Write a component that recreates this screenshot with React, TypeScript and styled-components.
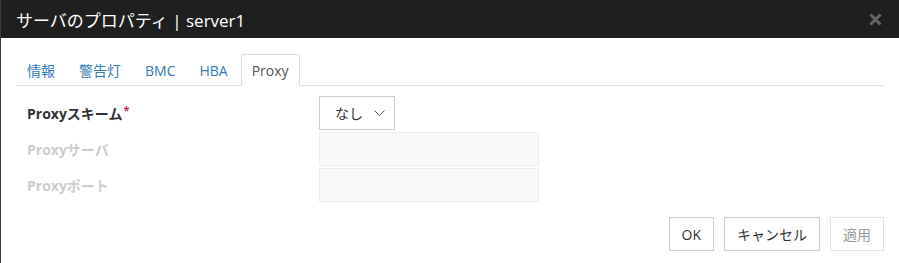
import React from "react";
import styled, { createGlobalStyle } from "styled-components";

const Global = createGlobalStyle`
  html, body { margin: 0; padding: 0; background: #fff; }
  body { font-family: "Open Sans", "Noto Sans CJK JP", sans-serif; font-size: 14px; color: #333; }
  * { box-sizing: border-box; }
`;

const Dialog = styled.div`
  width: 899px;
  height: 263px;
  border-left: 1px solid #3a3a3a;
  background: #fff;
  display: flex;
  flex-direction: column;
  overflow: hidden;
`;

const TitleBar = styled.div`
  height: 38px;
  background: #1f1f1f;
  display: flex;
  align-items: center;
  justify-content: space-between;
  padding: 0 16px 0 15px;
`;

const Title = styled.div`
  color: #fff;
  font-size: 17px;
  font-family: "Open Sans", "Noto Sans CJK JP", sans-serif;
`;

const Close = styled.button`
  border: none;
  background: none;
  padding: 0;
  width: 16px;
  height: 16px;
  display: flex;
  align-items: center;
  justify-content: center;
`;

const Body = styled.div`
  padding: 16px 15px 0 15px;
  display: flex;
  flex-direction: column;
`;

const Tabs = styled.div`
  display: flex;
  align-items: flex-end;
  border-bottom: 1px solid #ddd;
  height: 32px;
  width: 868px;
`;

const Tab = styled.div<{ $active?: boolean }>`
  height: ${(p) => (p.$active ? "32px" : "31px")};
  padding: 1px 10px 0;
  margin-bottom: ${(p) => (p.$active ? "-1px" : "0")};
  display: flex;
  align-items: center;
  font-size: 14px;
  color: ${(p) => (p.$active ? "#555" : "#337ab7")};
  background: #fff;
  border: 1px solid ${(p) => (p.$active ? "#ddd" : "transparent")};
  border-bottom-color: ${(p) => (p.$active ? "#fff" : "transparent")};
  border-radius: 3px 3px 0 0;
  margin-right: 2px;
`;

const Form = styled.div`
  display: flex;
  flex-direction: column;
  gap: 2px;
  padding: 10px 0 0 11px;
`;

const Row = styled.div`
  display: flex;
  align-items: center;
  height: 34px;
`;

const Label = styled.div<{ $disabled?: boolean }>`
  width: 292px;
  font-weight: bold;
  font-size: 14px;
  margin-top: -1px;
  color: ${(p) => (p.$disabled ? "#ccc" : "#333")};
`;

const Req = styled.span`
  color: #c7254e;
  font-size: 11px;
  position: relative;
  top: -5px;
  margin-left: 1px;
`;

const Select = styled.div`
  width: 76px;
  height: 34px;
  border: 1px solid #ccc;
  display: flex;
  align-items: center;
  justify-content: space-between;
  padding: 0 9px 0 15px;
  font-size: 14px;
  color: #333;
  background: #fff;
`;

const Input = styled.div`
  width: 220px;
  height: 34px;
  background: #f9f9f9;
  border: 1px solid #eee;
`;

const Footer = styled.div`
  display: flex;
  justify-content: flex-end;
  gap: 10px;
  padding: 15px 0 0 0;
  width: 868px;
`;

const Btn = styled.button<{ $disabled?: boolean }>`
  height: 34px;
  padding: 0 12px;
  border: 1px solid ${(p) => (p.$disabled ? "#e4e4e4" : "#ccc")};
  background: #fff;
  color: ${(p) => (p.$disabled ? "#999" : "#333")};
  font-size: 14px;
  font-family: "Open Sans", "Noto Sans CJK JP", sans-serif;
  border-radius: 0;
`;

export default function App() {
  return (
    <>
      <Global />
      <Dialog>
        <TitleBar>
          <Title>サーバのプロパティ | server1</Title>
          <Close aria-label="close">
            <svg width="13" height="13" viewBox="0 0 13 13">
              <path d="M1.5 1.5 L11.5 11.5 M11.5 1.5 L1.5 11.5" stroke="#666" strokeWidth="3" />
            </svg>
          </Close>
        </TitleBar>
        <Body>
          <Tabs>
            <Tab>情報</Tab>
            <Tab>警告灯</Tab>
            <Tab>BMC</Tab>
            <Tab>HBA</Tab>
            <Tab $active>Proxy</Tab>
          </Tabs>
          <Form>
            <Row>
              <Label>
                Proxyスキーム<Req>*</Req>
              </Label>
              <Select>
                なし
                <svg width="11" height="7" viewBox="0 0 11 7">
                  <path d="M0.5 0.5 L5.5 5.5 L10.5 0.5" fill="none" stroke="#555" strokeWidth="1" />
                </svg>
              </Select>
            </Row>
            <Row>
              <Label $disabled>Proxyサーバ</Label>
              <Input />
            </Row>
            <Row>
              <Label $disabled>Proxyポート</Label>
              <Input />
            </Row>
          </Form>
          <Footer>
            <Btn>OK</Btn>
            <Btn>キャンセル</Btn>
            <Btn $disabled>適用</Btn>
          </Footer>
        </Body>
      </Dialog>
    </>
  );
}
